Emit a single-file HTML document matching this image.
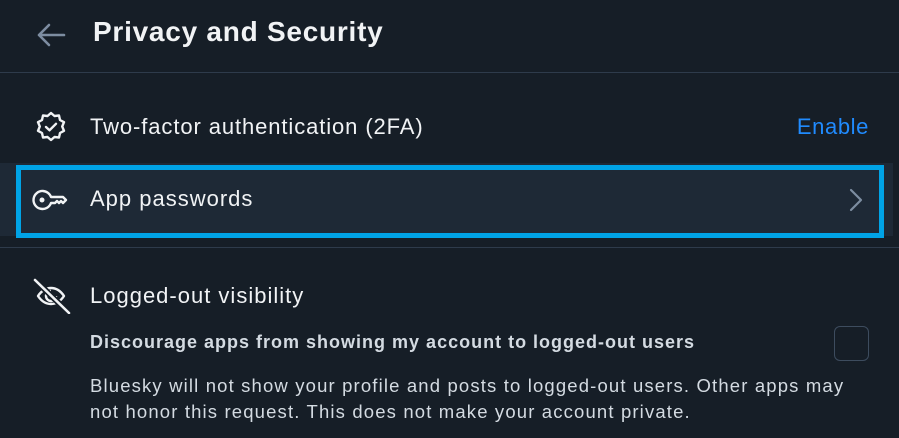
<!DOCTYPE html>
<html><head><meta charset="utf-8"><style>
body{margin:0;width:899px;height:438px;background:#161e27;font-family:"Liberation Sans",sans-serif;color:#f1f3f5;position:relative;overflow:hidden}
.a{position:absolute;white-space:nowrap}
</style></head><body>
<svg class="a" style="left:36px;top:22px" width="30" height="26" viewBox="0 0 30 26"><path d="M28 13H3M13 3L3 13l10 10" fill="none" stroke="#7d8da1" stroke-width="2.6" stroke-linecap="round" stroke-linejoin="round"/></svg>
<div class="a" style="left:93px;top:16px;font-size:28px;font-weight:bold;letter-spacing:0.75px">Privacy and Security</div>
<div class="a" style="left:0;top:72px;width:899px;height:1px;background:#2e3b4b"></div>

<svg class="a" style="left:33px;top:110px" width="36" height="36" viewBox="0 0 36 36"><path d="M18 3l3.5 3 4.5-.5 1 4.5 4 2.2-1.8 4.3 1.8 4.3-4 2.2-1 4.5-4.5-.5L18 30l-3.5-3-4.5.5-1-4.5-4-2.2 1.8-4.3L5 12.2l4-2.2 1-4.5 4.5.5z" fill="none" stroke="#f1f3f5" stroke-width="2.4" stroke-linejoin="round"/><path d="M13 17l3.5 3.3 6.5-6.5" fill="none" stroke="#f1f3f5" stroke-width="2.4" stroke-linecap="round" stroke-linejoin="round"/></svg>
<div class="a" style="left:90px;top:114px;font-size:22px;letter-spacing:0.9px">Two-factor authentication (2FA)</div>
<div class="a" style="right:30px;top:114px;font-size:22px;letter-spacing:0.6px;color:#208bfe">Enable</div>

<div class="a" style="left:0;top:163px;width:893px;height:73px;background:#1e2936"></div>
<div class="a" style="left:16px;top:165px;width:858px;height:63px;border:5px solid #00a3e6"></div>
<svg class="a" style="left:31px;top:188px" width="40" height="24" viewBox="0 0 40 24"><path d="M12 3a9 9 0 1 0 8 12h4l2-2 2 2 2-2 2 2 3-3-3-3H20a9 9 0 0 0-8-6z" fill="none" stroke="#f1f3f5" stroke-width="2.4" stroke-linejoin="round"/><circle cx="11" cy="12" r="2.5" fill="#f1f3f5"/></svg>
<div class="a" style="left:90px;top:186px;font-size:22px;letter-spacing:1px">App passwords</div>
<svg class="a" style="left:848px;top:187px" width="16" height="26" viewBox="0 0 16 26"><path d="M3 3l10 10-10 10" fill="none" stroke="#7d8da1" stroke-width="2.2" stroke-linecap="round" stroke-linejoin="round"/></svg>
<div class="a" style="left:0;top:247px;width:899px;height:1px;background:#2e3b4b"></div>

<svg class="a" style="left:31px;top:278px" width="40" height="36" viewBox="0 0 40 36"><path d="M7 18c4-6 8.5-8 13-8s9 2 13 8c-4 6-8.5 8-13 8s-9-2-13-8z" fill="none" stroke="#f1f3f5" stroke-width="2.4" stroke-linejoin="round"/><path d="M20 13a5 5 0 1 0 5 5" fill="none" stroke="#f1f3f5" stroke-width="2.4"/><path d="M4 2l33 32" stroke="#161e27" stroke-width="6"/><path d="M4 2l34 33" stroke="#f1f3f5" stroke-width="2.6" stroke-linecap="round"/></svg>
<div class="a" style="left:90px;top:283px;font-size:22px;letter-spacing:1px">Logged-out visibility</div>
<div class="a" style="left:90px;top:332px;font-size:18px;letter-spacing:1px;font-weight:bold;color:#d4dbe2">Discourage apps from showing my account to logged-out users</div>
<div class="a" style="left:834px;top:326px;width:33px;height:33px;border:1.5px solid #3d4c5e;border-radius:6px"></div>
<div class="a" style="left:90px;top:373px;font-size:18.5px;letter-spacing:1.15px;line-height:26px;color:#d4dbe2">Bluesky will not show your profile and posts to logged-out users. Other apps may<br>not honor this request. This does not make your account private.</div>
</body></html>
